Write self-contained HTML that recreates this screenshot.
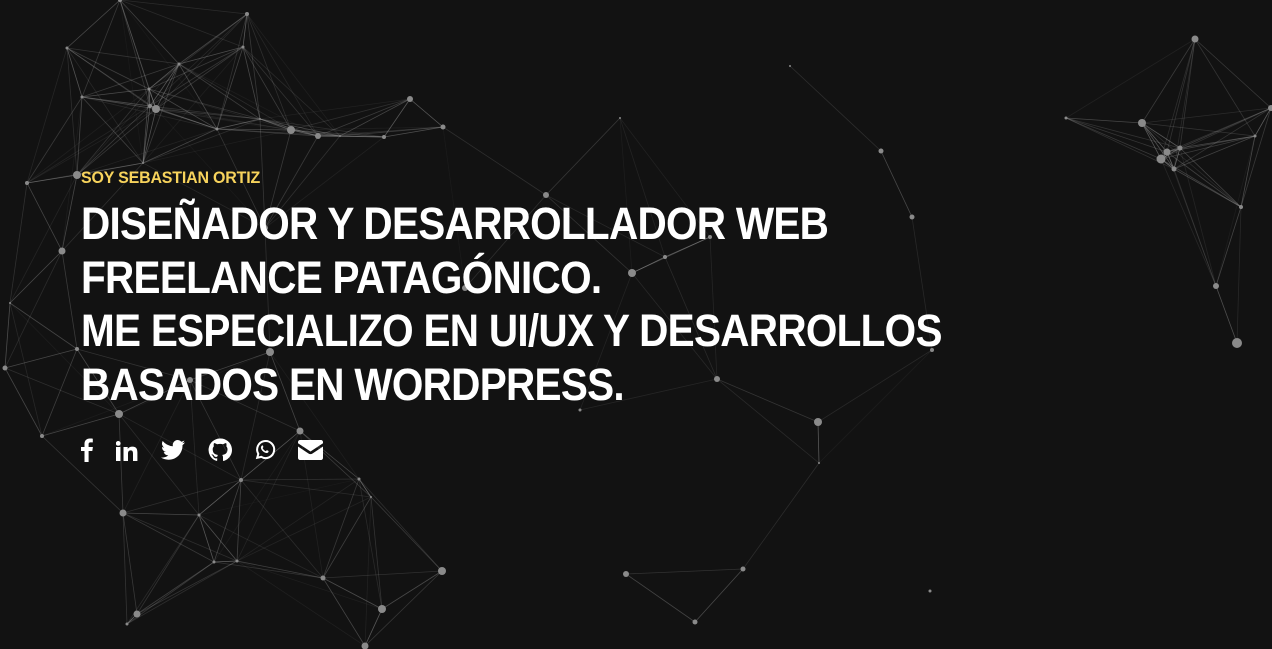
<!DOCTYPE html>
<html><head><meta charset="utf-8">
<style>
html,body{margin:0;padding:0;background:#121212;width:1272px;height:649px;overflow:hidden}
svg#bg{position:absolute;left:0;top:0}
.wrap{position:absolute;left:81px;top:166px;font-family:"Liberation Sans",sans-serif;font-weight:bold}
.sub{color:#f7d35c;font-size:17px;line-height:24px;letter-spacing:-0.2px;transform:scaleX(0.94);transform-origin:left;white-space:nowrap}
h1{margin:7px 0 0;color:#fff;font-size:45px;line-height:53.5px;letter-spacing:-0.8px;font-weight:bold;transform:scaleX(0.9);transform-origin:left;white-space:nowrap}
.icons{position:absolute;left:81px;top:438px}
.icons svg{position:absolute;top:0}
</style></head><body>
<svg id="bg" width="1272" height="649"><g id="e" stroke="#aaa" fill="none"></g><g id="n" fill="#8a8a8a"></g></svg>
<div class="wrap"><div class="sub">SOY SEBASTIAN ORTIZ</div>
<h1>DISEÑADOR Y DESARROLLADOR WEB<br>FREELANCE PATAGÓNICO.<br>ME ESPECIALIZO EN UI/UX Y DESARROLLOS<br>BASADOS EN WORDPRESS.</h1></div>
<div class="icons">
<svg style="left:0" width="12" height="24" viewBox="0 0 12 24"><path fill="#fff" d="M3.5 24V13H0V9h3.5V6c0-3.5 2-5.5 5.3-5.5 1.4 0 2.6.1 3 .2v3.7H9.6c-1.6 0-2 .8-2 2V9h4.3l-.6 4H7.6v11z"/></svg>
<svg style="left:35px;top:3px" width="22" height="20" viewBox="0 0 22 20"><rect fill="#fff" x="0" y="6" width="4.4" height="14"/><circle fill="#fff" cx="2.2" cy="2.4" r="2.4"/><path fill="#fff" d="M7.5 6h4.2v2c.8-1.4 2.5-2.4 4.7-2.4 4.2 0 5 2.6 5 6.2V20h-4.4v-7.2c0-1.7-.2-3.4-2.3-3.4S12 11 12 12.7V20H7.5z"/></svg>
<svg style="left:80px;top:2px" width="24" height="20" viewBox="0 0 24 20"><path fill="#fff" d="M24 2.4c-.9.4-1.8.6-2.8.8 1-.6 1.8-1.6 2.2-2.7-1 .6-2 1-3.1 1.2A4.9 4.9 0 0 0 11.900 6.2 14 14 0 0 1 1.7 1 4.9 4.9 0 0 0 3.2 7.6 4.9 4.9 0 0 1 1 7v.1a4.9 4.9 0 0 0 3.9 4.8 5 5 0 0 1-2.2.1 4.9 4.9 0 0 0 4.6 3.4A9.9 9.9 0 0 1 0 17.5 14 14 0 0 0 7.5 19.7c9.1 0 14-7.5 14-14v-.6c1-.7 1.8-1.6 2.5-2.7z"/></svg>
<svg style="left:127px;top:0" width="24" height="24" viewBox="0 0 24 24"><path fill="#fff" d="M12 .5A11.5 11.5 0 0 0 8.4 22.9c.6.1.8-.2.8-.6v-2c-3.2.7-3.900-1.5-3.900-1.5-.5-1.3-1.300-1.700-1.300-1.700-1-.7.1-.7.1-.7 1.2.1 1.8 1.2 1.8 1.2 1 1.8 2.7 1.3 3.4 1 .1-.8.4-1.3.7-1.6-2.6-.3-5.3-1.3-5.3-5.7 0-1.3.5-2.3 1.2-3.100-.1-.3-.5-1.500.1-3.100 0 0 1-.3 3.2 1.2a11 11 0 0 1 5.8 0c2.2-1.5 3.2-1.2 3.2-1.2.6 1.600.2 2.800.1 3.100.7.8 1.2 1.8 1.2 3.100 0 4.4-2.700 5.4-5.300 5.700.4.4.8 1.100.8 2.200v3.200c0 .3.2.7.8.6A11.5 11.5 0 0 0 12 .5z"/></svg>
<svg style="left:173px;top:1px" width="22" height="22" viewBox="0 0 24 24"><path fill="none" stroke="#fff" stroke-width="2.2" d="M3.5 20.5l1.2-4.3A9.3 9.3 0 1 1 8 19.5z"/><path fill="#fff" d="M8.6 7.2c.3-.3.6-.3.9-.3l.7 1.6c.1.3 0 .5-.2.7l-.6.7c.8 1.6 2 2.7 3.5 3.4l.7-.8c.2-.2.4-.3.7-.2l1.6.8c0 .4 0 1.2-.7 1.8-.6.5-1.8.6-3.5-.2-1.7-.8-3.7-2.6-4.1-4.7-.3-1.3.5-2.4 1-2.8z"/></svg>
<svg style="left:217px;top:2px" width="25" height="20" viewBox="0 0 25 20"><path fill="#fff" d="M0 6.5V18c0 1.1.9 2 2 2h21c1.1 0 2-.9 2-2V6.5l-10.5 7c-1.2.8-2.8.8-4 0zM2 0C.9 0 0 .9 0 2v1.2l12.5 8.3L25 3.2V2c0-1.1-.9-2-2-2z"/></svg>
</div>
<script>
var N=[[120,0,2],[247,14,2],[67,48,1.5],[243,47,1.5],[179,64,1.5],[82,97,1.5],[150,106,2],[156,109,4],[149,89,1.5],[217,129,1.5],[260,119,1],[291,130,4],[318,136,3],[340,136,1],[384,137,2],[410,99,3],[443,127,2.5],[143,163,1],[77,175,4],[27,183,2],[62,251,3.5],[10,303,1],[5,368,2.5],[77,349,2],[42,436,2],[119,414,4],[270,352,4],[300,431,3.5],[241,480,2],[123,513,3.5],[199,515,1.5],[214,562,1.5],[237,561,1.5],[359,479,1.5],[371,497,1],[323,578,2.5],[442,571,4],[382,609,4],[365,646,3.5],[137,614,3.5],[127,624,1.5],[546,195,3],[632,273,4],[665,257,2],[717,379,3],[818,422,4],[819,463,1],[790,66,1],[881,151,2.5],[912,217,2.5],[932,350,2],[626,574,3],[743,569,2.5],[695,622,2.5],[580,410,1.5],[930,591,1.5],[620,118,1],[190,380,3],[465,288,3],[265,228,3],[710,237,2],
[1195,39,3.5],[1066,118,1.5],[1142,123,4],[1167,152,3.5],[1161,159,4.5],[1180,148,2.5],[1174,169,2.5],[1255,136,1.5],[1271,108,3],[1241,207,2],[1216,286,3],[1237,343,5]];
var e='',n='';
for(var i=0;i<N.length;i++){n+='<circle cx="'+N[i][0]+'" cy="'+N[i][1]+'" r="'+N[i][2]+'"/>';
for(var j=i+1;j<N.length;j++){var dx=N[i][0]-N[j][0],dy=N[i][1]-N[j][1],d=Math.sqrt(dx*dx+dy*dy);
if(d<165){var o=(1-d/165)*0.55+0.05;e+='<line x1="'+N[i][0]+'" y1="'+N[i][1]+'" x2="'+N[j][0]+'" y2="'+N[j][1]+'" stroke-opacity="'+o.toFixed(2)+'" stroke-width="0.8"/>';}}}
document.getElementById('e').innerHTML=e;document.getElementById('n').innerHTML=n;
</script>
</body></html>
